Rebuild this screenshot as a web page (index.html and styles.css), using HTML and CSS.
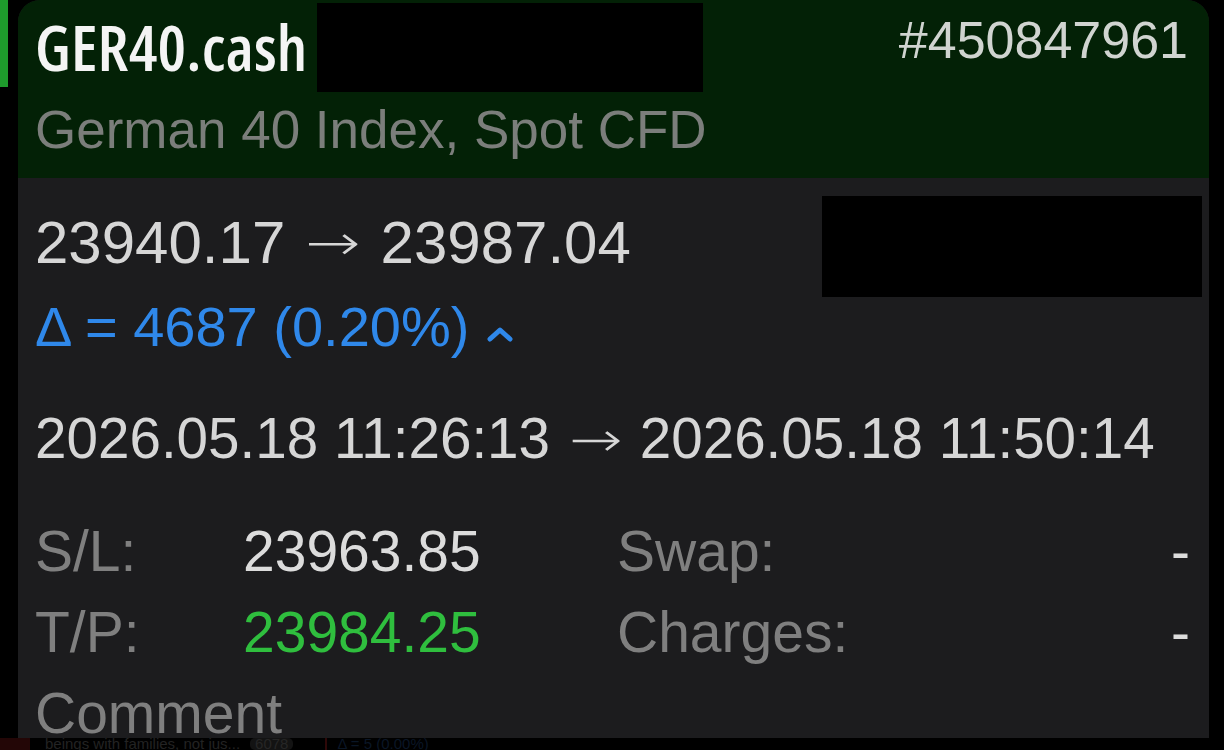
FILE: index.html
```html
<!DOCTYPE html>
<html lang="en">
<head>
<meta charset="utf-8">
<title>GER40.cash position</title>
<link rel="stylesheet" href="styles.css">
</head>
<body>
<div class="page">
  <div class="main">
    <div class="rail"><div class="rail-bar"></div></div>
    <section class="card">
      <header class="head">
        <div class="head-top">
          <span class="symbol">GER40.cash</span>
          <span class="order">#450847961</span>
        </div>
        <div class="desc">German 40 Index, Spot CFD</div>
      </header>
      <div class="body">
        <div class="prices">23940.17<span class="arrow">→</span>23987.04</div>
        <div class="delta">Δ = 4687 (0.20%)<svg class="caret" width="28" height="18" viewBox="0 0 28 18"><polyline points="4,14 14,5 24,14" fill="none" stroke="#2f88ea" stroke-width="5" stroke-linecap="round" stroke-linejoin="round"/></svg></div>
        <div class="dates">2026.05.18 11:26:13<span class="arrow">→</span>2026.05.18 11:50:14</div>
        <div class="details">
          <span class="lbl">S/L:</span>
          <span class="val">23963.85</span>
          <span class="lbl">Swap:</span>
          <span class="val dash">-</span>
          <span class="lbl">T/P:</span>
          <span class="val green">23984.25</span>
          <span class="lbl">Charges:</span>
          <span class="val dash">-</span>
          <span class="lbl comment">Comment</span>
        </div>
      </div>
      <div class="redact redact-a"></div>
      <div class="redact redact-b"></div>
    </section>
  </div>
  <div class="strip">
    <span class="strip-flag"></span>
    <span class="strip-text">beings with families, not jus...</span>
    <span class="strip-pill">6078</span>
    <span class="strip-delta">Δ = 5 (0.00%)</span>
  </div>
</div>
</body>
</html>
```

FILE: styles.css
```css
* { box-sizing: border-box; }
html, body {
  margin: 0;
  padding: 0;
  background: #000;
  width: 1224px;
  height: 750px;
  overflow: hidden;
}
body {
  font-family: "Liberation Sans", Arial, sans-serif;
}
.page {
  display: flex;
  flex-direction: column;
}
.main {
  display: flex;
  height: 738px;
}
.rail {
  width: 18px;
  flex: none;
}
.rail-bar {
  width: 8px;
  height: 87px;
  background: #1e9b2c;
}
.card {
  position: relative;
  width: 1191px;
  height: 738px;
  border-radius: 22px 22px 0 0;
  overflow: hidden;
  background: #1c1c1e;
  display: flex;
  flex-direction: column;
}
.head {
  height: 178px;
  flex: none;
  background: #032106;
  padding: 2px 21px 0 17px;
}
.head-top {
  display: flex;
  justify-content: space-between;
  align-items: flex-start;
  height: 91px;
}
.symbol {
  font-family: "Open Sans", "Liberation Sans", sans-serif;
  font-weight: 600;
  font-stretch: 75%;
  font-size: 64px;
  letter-spacing: 0.2px;
  line-height: 90px;
  color: #f4f4f4;
}
.order {
  font-size: 52px;
  line-height: 76px;
  color: #d0d4d0;
}
.desc {
  margin-top: 2px;
  font-size: 53px;
  line-height: 70px;
  color: #7b7e7b;
}
.body {
  padding: 23px 19px 0 17px;
  color: #d6d6d6;
}
.arrow {
  font-family: "DejaVu Sans", sans-serif;
  font-weight: 200;
  display: inline-block;
  transform: scaleY(0.75);
}
.prices {
  font-size: 60px;
  line-height: 84px;
  display: flex;
}
.prices .arrow {
  margin: 0 20px 0 20px;
  font-size: 66px;
}
.delta {
  font-size: 56px;
  line-height: 84px;
  color: #2f88ea;
  display: flex;
  align-items: center;
  gap: 17px;
  white-space: pre;
}
.caret { margin-top: 14px; }
.dates {
  margin-top: 30px;
  font-size: 56.6px;
  line-height: 80px;
  display: flex;
}
.dates .arrow {
  margin: 0 17px 0 19px;
  font-size: 64px;
}
.details {
  margin-top: 32px;
  display: grid;
  grid-template-columns: 208px 374px 1fr auto;
  font-size: 57px;
  line-height: 81px;
}
.lbl { color: #7f7f7f; }
.val { color: #dcdcdc; }
.green { color: #2fbe3e; }
.dash { justify-self: end; }
.comment { grid-column: 1 / -1; }
.redact {
  position: absolute;
  background: #000;
}
.redact-a {
  left: 299px;
  top: 3px;
  width: 386px;
  height: 89px;
}
.redact-b {
  left: 804px;
  top: 196px;
  width: 380px;
  height: 101px;
}
.strip {
  height: 12px;
  overflow: hidden;
  display: flex;
  align-items: flex-start;
  font-size: 15px;
  line-height: 12px;
  color: #232323;
}
.strip-flag {
  width: 30px;
  height: 12px;
  background: #230606;
  flex: none;
}
.strip-text { margin-left: 15px; }
.strip-pill {
  margin-left: 10px;
  padding: 0 5px;
  border-radius: 5px;
  background: #131313;
  color: #262626;
}
.strip-delta {
  margin-left: 32px;
  color: #0a1626;
  border-left: 2px solid #2e0808;
  padding-left: 10px;
}
```
